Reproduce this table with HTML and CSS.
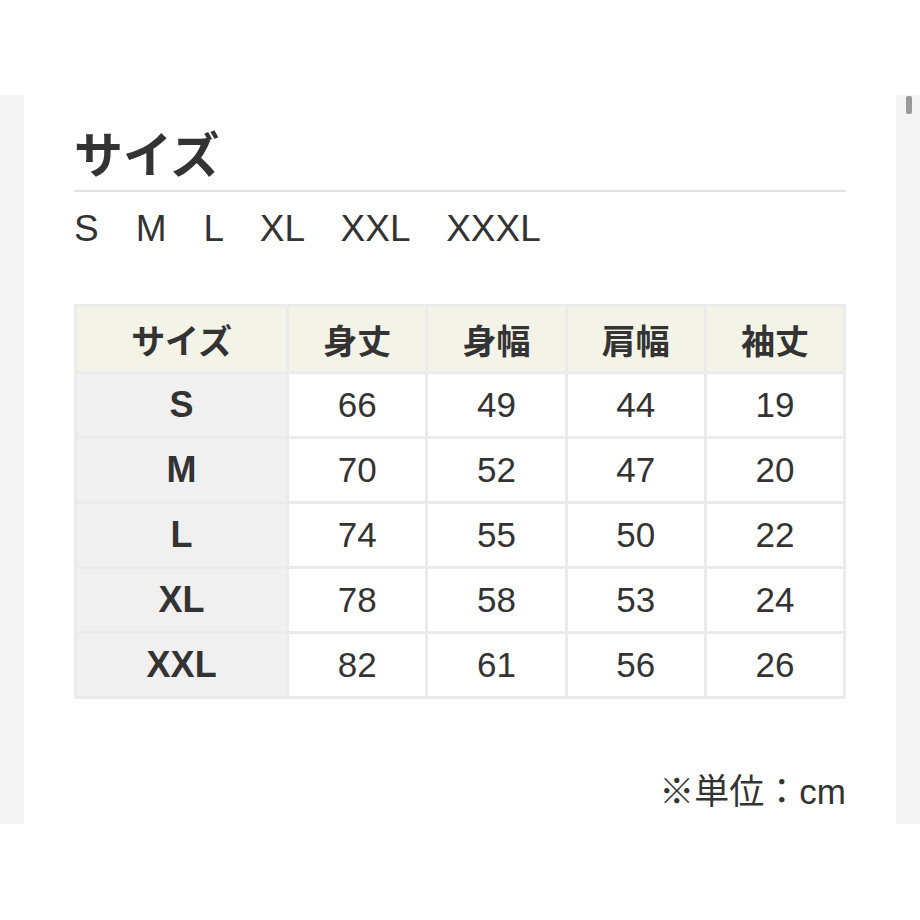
FILE: index.html
```html
<!DOCTYPE html>
<html lang="ja">
<head>
<meta charset="utf-8">
<link rel="stylesheet" href="styles.css">
</head>
<body>
<div class="screen">
  <div class="gutter"></div>
  <main class="content">
    <h2 class="title">サイズ</h2>
    <p class="sizes">S　M　L　XL　XXL　XXXL</p>
    <table class="chart">
      <colgroup>
        <col class="col-size">
        <col class="col-val"><col class="col-val"><col class="col-val"><col class="col-val">
      </colgroup>
      <thead>
        <tr><th>サイズ</th><th>身丈</th><th>身幅</th><th>肩幅</th><th>袖丈</th></tr>
      </thead>
      <tbody>
        <tr><th>S</th><td>66</td><td>49</td><td>44</td><td>19</td></tr>
        <tr><th>M</th><td>70</td><td>52</td><td>47</td><td>20</td></tr>
        <tr><th>L</th><td>74</td><td>55</td><td>50</td><td>22</td></tr>
        <tr><th>XL</th><td>78</td><td>58</td><td>53</td><td>24</td></tr>
        <tr><th>XXL</th><td>82</td><td>61</td><td>56</td><td>26</td></tr>
      </tbody>
    </table>
    <p class="unit">※単位：cm</p>
  </main>
  <div class="gutter scroll"><span class="thumb"></span></div>
</div>
</body>
</html>
```
FILE: styles.css
```css
html, body {
  margin: 0;
  padding: 0;
  background: #fff;
}
body {
  font-family: "Liberation Sans", "Noto Sans CJK JP", sans-serif;
  color: #333;
}
.screen {
  margin-top: 95px;
  height: 729px;
  display: flex;
}
.gutter {
  width: 24px;
  background: #f4f4f4;
  flex: none;
}
.scroll {
  display: flex;
  justify-content: center;
  align-items: flex-start;
}
.thumb {
  display: block;
  width: 6px;
  height: 18px;
  margin-top: 1px;
  margin-left: 2px;
  border-radius: 2px;
  background: #9a9a9a;
}
.content {
  flex: 1;
  min-width: 0;
  padding: 0 50px;
  display: flex;
  flex-direction: column;
}
.title {
  margin: 27px 0 0;
  padding: 0 0 8px;
  font-family: "Noto Sans CJK JP", sans-serif;
  font-size: 49px;
  font-weight: 700;
  line-height: 60px;
  color: #333;
  border-bottom: 2px solid #e2e2e2;
}
.sizes {
  margin: 15px 0 0;
  font-size: 37px;
  line-height: 44px;
  padding-left: 0;
  color: #333;
}
.chart {
  margin-top: 53px;
  width: 100%;
  border-collapse: collapse;
  table-layout: fixed;
  border: 3px solid #ebebeb;
}
.col-size {
  width: 27.6%;
}
.col-val {
  width: 18.1%;
}
.chart th, .chart td {
  border: 3px solid #ebebeb;
  text-align: center;
  padding: 0;
  height: 62px;
  color: #333;
}
.chart thead th {
  height: 64px;
  background: #f3f3e7;
  font-family: "Noto Sans CJK JP", sans-serif;
  font-size: 34px;
  font-weight: 700;
}
.chart tbody th {
  background: #f0f0f0;
  font-size: 36px;
  font-weight: 700;
}
.chart td {
  background: #fff;
  font-size: 35px;
  font-weight: 400;
}
.unit {
  margin: 73px 0 0;
  text-align: right;
  font-family: "Liberation Sans", "Noto Sans CJK JP", sans-serif;
  font-size: 35px;
  line-height: 40px;
  color: #333;
}
```
